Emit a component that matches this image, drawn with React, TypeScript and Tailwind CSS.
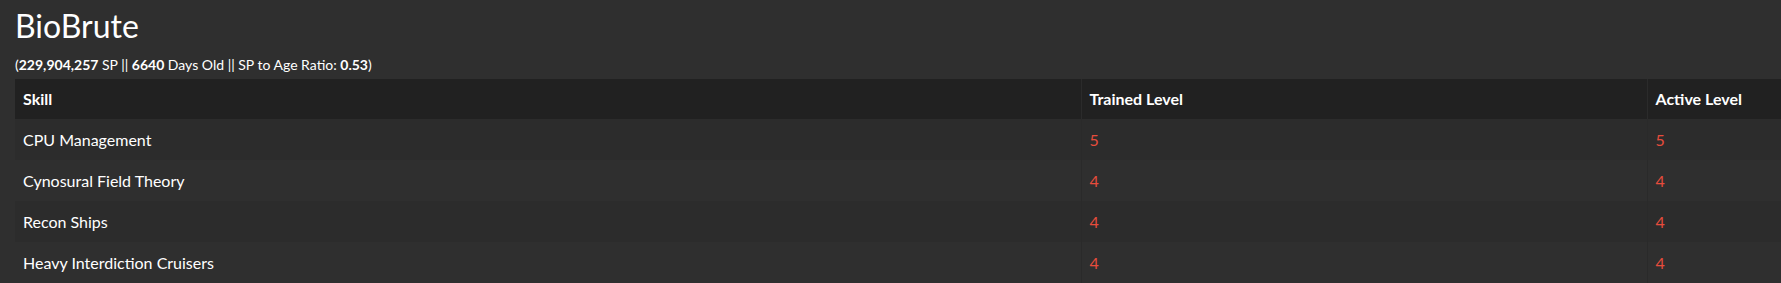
import React from 'react';

interface SkillRow {
  name: string;
  trained: number;
  active: number;
}

const SKILLS: SkillRow[] = [
  { name: 'CPU Management', trained: 5, active: 5 },
  { name: 'Cynosural Field Theory', trained: 4, active: 4 },
  { name: 'Recon Ships', trained: 4, active: 4 },
  { name: 'Heavy Interdiction Cruisers', trained: 4, active: 4 },
];

export default function App() {
  return (
    <div
      className="min-h-screen bg-[#2f2f2f] pl-[15px] text-white"
      style={{ fontFamily: 'Lato, "Open Sans", sans-serif' }}
    >
      <h1 className="pt-[6px] text-[32px] leading-[40px] font-normal">BioBrute</h1>
      <p className="mt-[9px] text-[14px] leading-[20px]">
        (<strong>229,904,257</strong> SP || <strong>6640</strong> Days Old || SP to Age Ratio:{' '}
        <strong>0.53</strong>)
      </p>
      <table className="mt-[4px] w-full table-fixed border-collapse text-[16px]">
        <colgroup>
          <col className="w-[1066px]" />
          <col className="w-[566px]" />
          <col />
        </colgroup>
        <thead>
          <tr className="h-[40px] bg-[#212121] text-left">
            <th className="px-2 font-bold">Skill</th>
            <th className="border-l border-[#2b2b2b] px-2 font-bold">Trained Level</th>
            <th className="border-l border-[#2b2b2b] px-2 font-bold">Active Level</th>
          </tr>
        </thead>
        <tbody>
          {SKILLS.map((skill, i) => (
            <tr key={skill.name} className={`h-[41px] ${i % 2 === 0 ? 'bg-[#2c2c2c]' : 'bg-[#2f2f2f]'}`}>
              <td className="px-2">{skill.name}</td>
              <td className="border-l border-[#2a2a2a] px-2 text-[#e74c3c]">{skill.trained}</td>
              <td className="border-l border-[#2a2a2a] px-2 text-[#e74c3c]">{skill.active}</td>
            </tr>
          ))}
        </tbody>
      </table>
    </div>
  );
}
